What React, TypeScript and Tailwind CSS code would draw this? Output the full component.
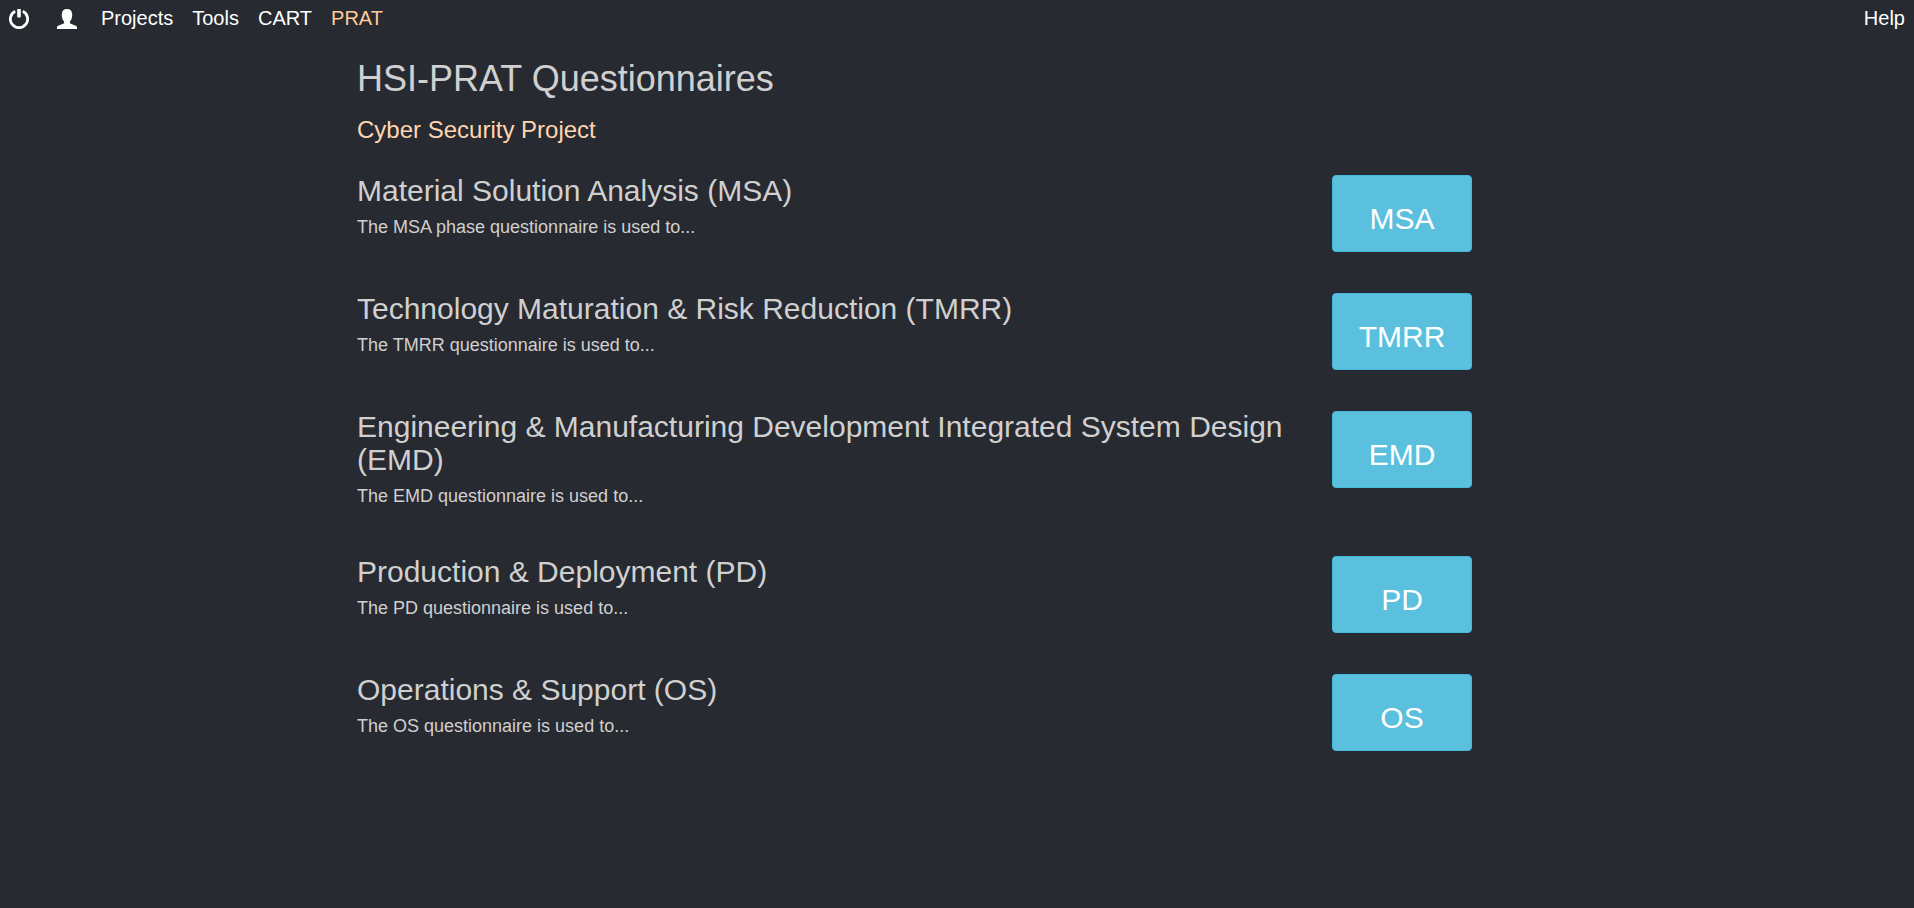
const navItems = [
  { label: "Projects", active: false },
  { label: "Tools", active: false },
  { label: "CART", active: false },
  { label: "PRAT", active: true },
];

const questionnaires = [
  { code: "MSA", title: "Material Solution Analysis (MSA)", text: "The MSA phase questionnaire is used to..." },
  { code: "TMRR", title: "Technology Maturation & Risk Reduction (TMRR)", text: "The TMRR questionnaire is used to..." },
  {
    code: "EMD",
    title: "Engineering & Manufacturing Development Integrated System Design (EMD)",
    text: "The EMD questionnaire is used to...",
  },
  { code: "PD", title: "Production & Deployment (PD)", text: "The PD questionnaire is used to..." },
  { code: "OS", title: "Operations & Support (OS)", text: "The OS questionnaire is used to..." },
];

function PowerIcon() {
  return (
    <svg viewBox="0 0 20 20" className="size-5" aria-hidden="true">
      <path d="M6.200 2.300A8.600 8.600 0 1 0 13.800 2.300" fill="none" stroke="currentColor" strokeWidth="2.800" />
      <rect x="8.200" y="0" width="3.600" height="8.400" rx="0.600" fill="currentColor" />
    </svg>
  );
}

function UserIcon() {
  return (
    <svg viewBox="0 0 20 20" className="size-5" fill="currentColor" aria-hidden="true">
      <path d="M10 0C13.400 0 15 1.700 15 4.600C15.400 5.600 15.300 7.800 14.800 8.800C14.500 10.600 13.800 11.600 13 12.300V14.200C14.800 15.400 19 16.200 20 17.800V20H0V17.800C1 16.200 5.200 15.400 7 14.200V12.300C6.200 11.600 5.500 10.600 5.200 8.800C4.700 7.800 4.600 5.600 5 4.600C5 1.700 6.600 0 10 0Z" />
    </svg>
  );
}

export default function App() {
  return (
    <div className="min-h-screen bg-[#272a30] font-['Liberation_Sans',Arial,sans-serif] text-[#d0d0d0]">
      <nav className="flex h-12 items-start justify-between px-[9px] pt-2 text-[20px] leading-5 text-white">
        <div className="flex items-start">
          <a href="#logout" aria-label="Log out" className="pt-px"><PowerIcon /></a>
          <a href="#account" aria-label="Account" className="ml-7 pt-px"><UserIcon /></a>
          <div className="ml-6 flex gap-[19px]">
            {navItems.map((item) => (
              <a key={item.label} href={`#${item.label}`} className={item.active ? "text-[#ffcc99]" : "text-white"}>
                {item.label}
              </a>
            ))}
          </div>
        </div>
        <a href="#help">Help</a>
      </nav>

      <main className="mx-auto flex w-full max-w-[1200px] flex-col pt-[11px]">
        <h1 className="text-[36px] leading-10">HSI-PRAT Questionnaires</h1>
        <h2 className="mt-[18px] text-[24px] leading-[26px] text-[#ffd5b0]">Cyber Security Project</h2>
        <div className="mt-[31px]">
          {questionnaires.map((q) => (
            <section key={q.code} className="flex items-start pb-10">
              <div className="min-w-0 flex-1 pr-[30px] pb-[9px]">
                <h3 className="text-[30px] leading-[33px]">{q.title}</h3>
                <p className="mt-[10px] text-[18px] leading-5">{q.text}</p>
              </div>
              <button
                type="button"
                className="mt-px mr-[85px] h-[77px] w-[140px] rounded border border-[#46b8da] bg-[#5bc0de] pt-[10px] text-[30px] leading-[33px] text-white"
              >
                {q.code}
              </button>
            </section>
          ))}
        </div>
      </main>
    </div>
  );
}
